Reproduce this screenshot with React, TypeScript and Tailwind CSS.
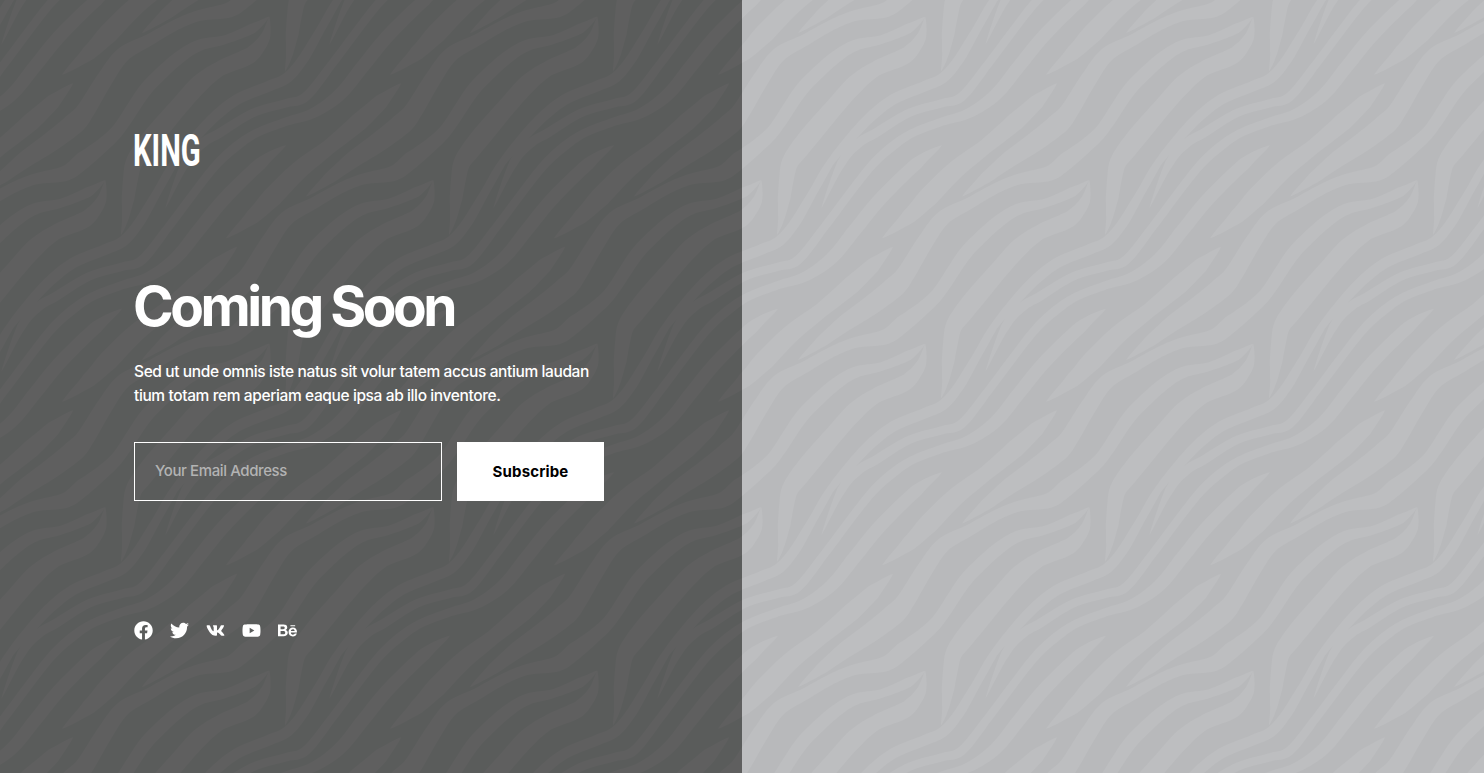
import React from 'react';
import { FaFacebook, FaTwitter, FaVk, FaYoutube, FaBehance } from 'react-icons/fa';

// zebra stripes, traced at 3x: each point is [x, y, width]
type Pt = [number, number, number];

const RIBBONS: Pt[][] = [
  // upper arm of the hook, runs down to a tip
  [[550,50,0],[500,85,30],[420,118,26],[340,136,34],[280,172,38],[215,230,40],[170,280,40],[100,385,38],[50,435,42],[-10,482,52],[-62,520,46],[-152,537,32],[-222,565,32],[-302,610,35],[-382,655,45],[-437,730,50],[-492,820,55],[-526,860,65],[-596,915,60],[-676,970,50],[-746,1025,35],[-816,1080,0]],
  // lower arm of the hook
  [[550,50,0],[538,110,30],[505,155,45],[475,175,50],[400,207,45],[340,252,55],[280,318,55],[210,400,60],[170,450,58],[143,490,50],[133,540,44],[126,595,38],[117,660,18],[105,705,0]],
  // thin band that never ends
  [[755,0,22],[703,90,25],[655,172,30],[605,232,32],[550,258,32],[460,295,32],[400,338,32],[340,398,30],[263,490,22],[211,580,25],[163,662,30]],
  // long thin band
  [[1092,-55,0],[1016,0,38],[908,105,40],[830,200,40],[760,285,38],[680,340,30],[600,365,25],[510,400,25],[450,440,28],[395,490,26],[338,560,25],[248,680,25],[168,780,28],[108,800,25],[8,830,25],[-92,890,28],[-142,920,28],[-194,980,26],[-254,1115,0]],
  // leaf
  [[945,250,0],[885,305,45],[820,365,55],[730,440,45],[640,510,55],[560,590,60],[500,650,45],[420,715,0]],
];

const ribbonPath = (pts: Pt[], dx: number, dy: number) => {
  const line: Pt[] = [];
  for (let i = 0; i < pts.length - 1; i++) {
    const p0 = pts[Math.max(i - 1, 0)];
    const p1 = pts[i];
    const p2 = pts[i + 1];
    const p3 = pts[Math.min(i + 2, pts.length - 1)];
    for (let s = 0; s < 8; s++) {
      const t = s / 8;
      const cr = (a: number, b: number, c: number, d: number) =>
        0.5 * (2 * b + (c - a) * t + (2 * a - 5 * b + 4 * c - d) * t * t + (3 * b - a - 3 * c + d) * t * t * t);
      line.push([cr(p0[0], p1[0], p2[0], p3[0]), cr(p0[1], p1[1], p2[1], p3[1]), p1[2] + (p2[2] - p1[2]) * t]);
    }
  }
  line.push(pts[pts.length - 1]);
  const left: string[] = [];
  const right: string[] = [];
  line.forEach((p, i) => {
    const a = line[Math.max(i - 1, 0)];
    const b = line[Math.min(i + 1, line.length - 1)];
    const len = Math.hypot(b[0] - a[0], b[1] - a[1]) || 1;
    const nx = (-(b[1] - a[1]) / len) * (p[2] / 2);
    const ny = ((b[0] - a[0]) / len) * (p[2] / 2);
    left.push(`${(p[0] + nx + dx).toFixed(1)} ${(p[1] + ny + dy).toFixed(1)}`);
    right.unshift(`${(p[0] - nx + dx).toFixed(1)} ${(p[1] - ny + dy).toFixed(1)}`);
  });
  return `M${left.join('L')}L${right.join('L')}Z`;
};

const buildStripes = () => {
  let d = '';
  for (let i = -4; i <= 4; i++) {
    for (let j = -4; j <= 4; j++) {
      const dx = i * 984 + (j % 2 !== 0 ? 492 : 0);
      const dy = j * 490.5;
      if (Math.abs(dx) > 2100 || Math.abs(dy) > 1500) continue;
      RIBBONS.forEach((r) => {
        d += ribbonPath(r, dx, dy);
      });
    }
  }
  return d;
};

const STRIPES = buildStripes();

const Zebra = ({ id, base, light, shift }: { id: string; base: string; light: string; shift: number }) => (
  <svg className="absolute inset-0 w-full h-full">
    <defs>
      <pattern id={id} patternUnits="userSpaceOnUse" width="328" height="327" patternTransform={`translate(${shift} 0)`}>
        <rect width="328" height="327" fill={base} />
        <path d={STRIPES} fill={light} transform="scale(0.33333)" />
      </pattern>
    </defs>
    <rect width="100%" height="100%" fill={`url(#${id})`} />
  </svg>
);

export default function App() {
  return (
    <div className="flex h-screen w-full overflow-hidden font-['Inter',sans-serif]">
      <div className="relative w-1/2 h-full">
        <Zebra id="zebra-dark" base="#5a5c5b" light="#5f5f5f" shift={86} />
        <div className="relative flex flex-col pl-[134px] pt-[134px] text-white">
          <div className="h-[33px] flex items-center -ml-[1px]">
            <span className="origin-left scale-x-[0.65] font-['Roboto',sans-serif] font-bold text-[45px] leading-[33px]">KING</span>
          </div>
          <h1 className="mt-[105px] -ml-[1px] text-[55px] leading-[68px] font-bold tracking-[-0.063em]">Coming Soon</h1>
          <p className="mt-[20px] w-[480px] text-[15.5px] leading-[24px] font-medium tracking-[-0.025em]">
            Sed ut unde omnis iste natus sit volur tatem accus antium laudan
            <br />
            tium totam rem aperiam eaque ipsa ab illo inventore.
          </p>
          <form className="mt-[34px] flex gap-[15px]">
            <input
              type="text"
              placeholder="Your Email Address"
              className="w-[308px] h-[59px] px-5 pb-[2px] border border-white bg-transparent text-[15px] font-medium tracking-[-0.026em] placeholder:text-[#b3b3b3] outline-none"
            />
            <button type="button" className="w-[147px] h-[59px] pt-[2px] bg-white text-black text-[15px] font-bold tracking-[0.01em]">
              Subscribe
            </button>
          </form>
          <div className="mt-[119px] flex gap-4">
            <span className="w-5 h-5 flex items-center justify-start"><FaFacebook size={19} /></span>
            <span className="w-5 h-5 flex items-center justify-start"><FaTwitter size={19} /></span>
            <span className="w-5 h-5 flex items-center justify-start"><FaVk size={19} /></span>
            <span className="w-5 h-5 flex items-center justify-start"><FaYoutube size={19} /></span>
            <span className="w-5 h-5 flex items-center justify-start"><FaBehance size={19} /></span>
          </div>
        </div>
      </div>
      <div className="relative w-1/2 h-full">
        <Zebra id="zebra-light" base="#b8b9bb" light="#bdbec0" shift={0} />
      </div>
    </div>
  );
}
